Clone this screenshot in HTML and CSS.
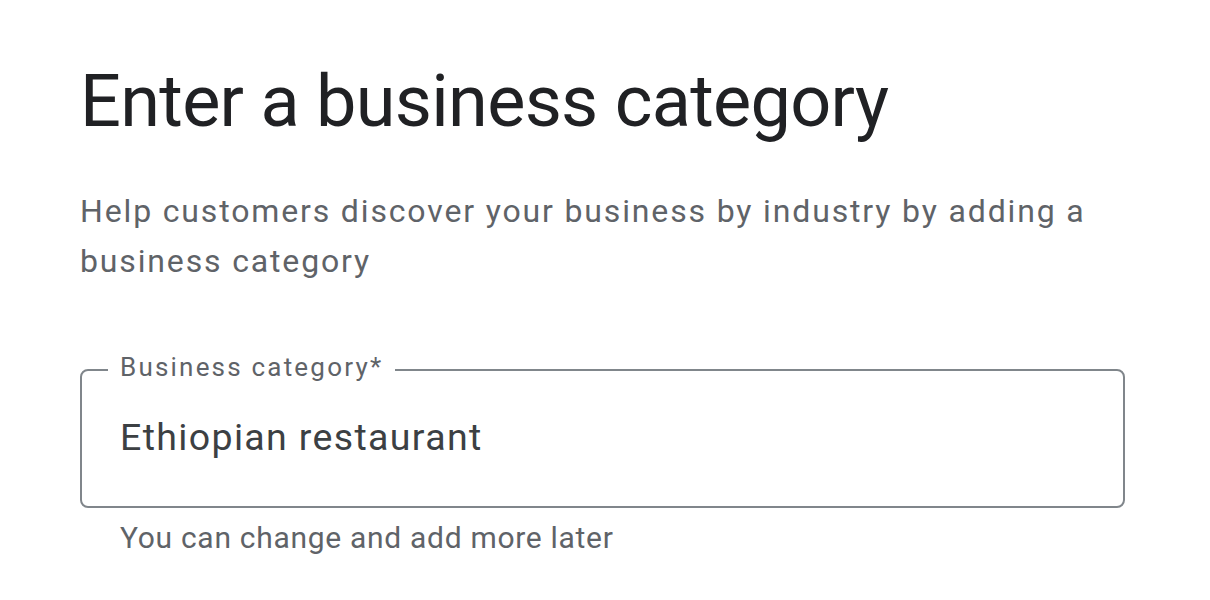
FILE: index.html
```html
<!DOCTYPE html>
<html lang="en">
<head>
<meta charset="utf-8">
<title>Enter a business category</title>
<link rel="stylesheet" href="styles.css">
</head>
<body>
<main class="page">
  <h1 class="title">Enter a business category</h1>
  <p class="intro">Help customers discover your business by industry by adding a business category</p>
  <fieldset class="field">
    <legend class="field-label">Business category*</legend>
    <div class="field-value">Ethiopian restaurant</div>
  </fieldset>
  <p class="helper">You can change and add more later</p>
</main>
</body>
</html>
```
FILE: styles.css
```css
html, body {
  margin: 0;
  padding: 0;
  background: #ffffff;
}
.page {
  padding: 58px 85px 0 80px;
  font-family: Roboto, "Liberation Sans", sans-serif;
}
.title {
  margin: 0;
  font-size: 72px;
  line-height: 88px;
  font-weight: 400;
  color: #202124;
  letter-spacing: -0.7px;
}
.intro {
  margin: 40px 0 0;
  font-size: 32px;
  line-height: 50px;
  color: #5f6368;
  letter-spacing: 1.85px;
}
.field {
  margin: 68px 0 0;
  padding: 0 38px 0;
  border: 2px solid #80868b;
  border-radius: 8px;
  height: 154px;
  box-sizing: border-box;
  min-width: 0;
}
.field-label {
  margin-left: -12px;
  padding: 0 12px 5px;
  font-size: 26px;
  line-height: 26px;
  color: #5f6368;
  letter-spacing: 2.2px;
}
.field-value {
  margin-top: 30px;
  font-size: 37.5px;
  line-height: 44px;
  color: #3c4043;
  letter-spacing: 1.35px;
}
.helper {
  margin: 12px 0 0 40px;
  font-size: 30px;
  line-height: 36px;
  color: #5f6368;
  letter-spacing: 0.7px;
}
```
